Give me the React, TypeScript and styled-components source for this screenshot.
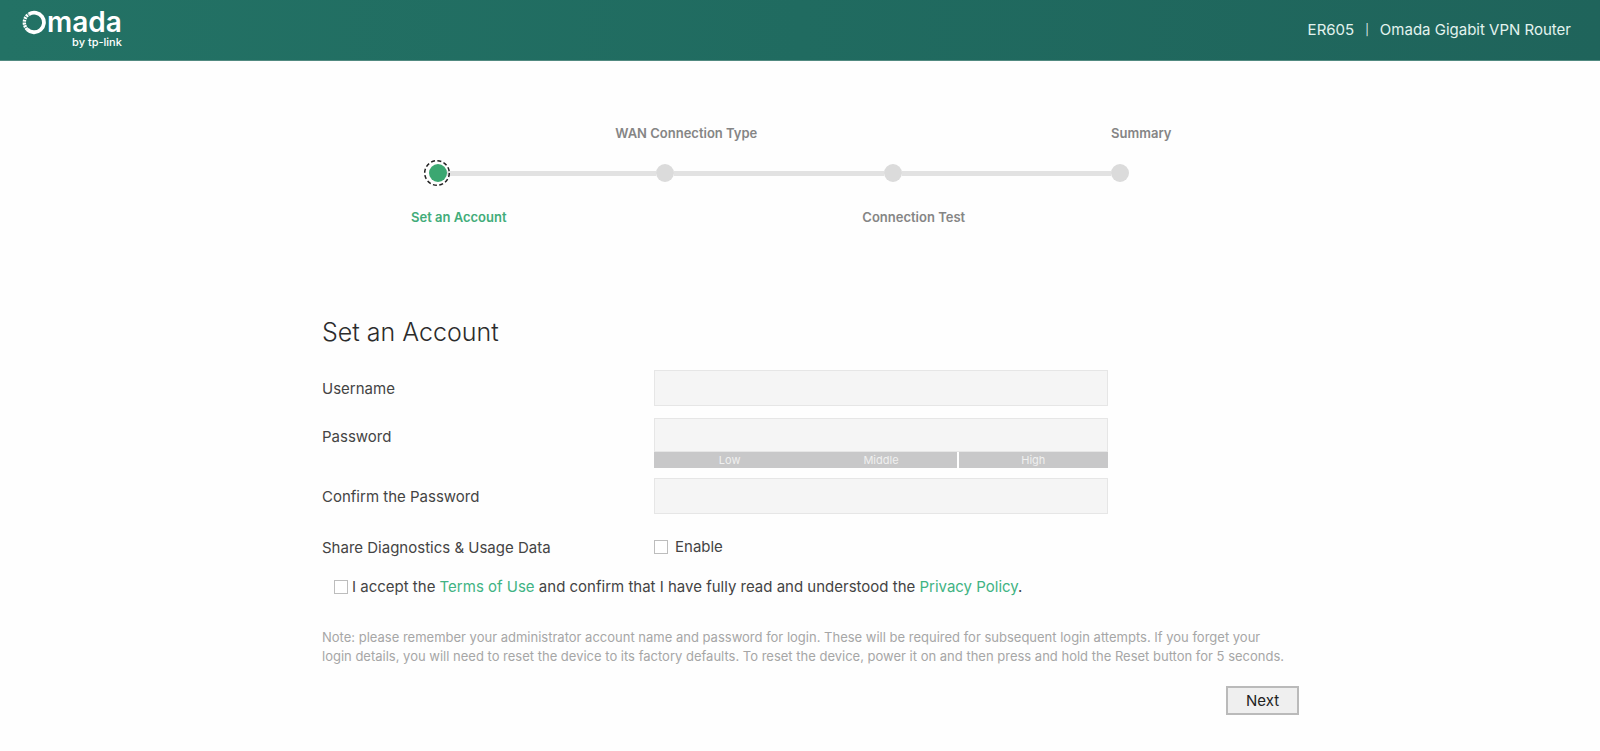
import React from "react";
import styled, { createGlobalStyle } from "styled-components";

const GlobalStyle = createGlobalStyle`
  *, *::before, *::after { box-sizing: border-box; }
  body {
    margin: 0;
    background: #fefefe;
    color: #444;
    font-family: Inter, "Liberation Sans", sans-serif;
    font-size: 15px;
    font-weight: 400;
    line-height: 20px;
  }
`;

const Header = styled.header`
  display: flex;
  align-items: center;
  justify-content: space-between;
  height: 61px;
  padding: 0 29px 0 22px;
  color: #e3f3ef;
  background: linear-gradient(90deg, #237265 0%, #206b60 50%, #1f645b 100%);
  border-bottom: 1px solid #518a81;
`;

const Logo = styled.div`
  display: flex;
  flex-direction: column;
  align-items: flex-end;
  padding-bottom: 4px;
  color: #fff;
`;

const Wordmark = styled.div`
  display: flex;
  align-items: center;
  gap: 1px;
  height: 27px;
  font-size: 28px;
  font-weight: 600;
  line-height: 27px;
`;

const Byline = styled.div`
  font-size: 11px;
  font-weight: 500;
  line-height: 12px;
`;

const Device = styled.div`
  display: flex;
  gap: 11px;
`;

const Divider = styled.span`
  font-size: 11px;
`;

const Steps = styled.ol`
  display: grid;
  grid-template-columns: repeat(4, 1fr);
  max-width: 910px;
  margin: 0 auto;
  padding: 62px 0 0;
  list-style: none;
`;

const Step = styled.li`
  display: grid;
  grid-template-rows: 20px 60px 28px;
  justify-items: center;
`;

const StepLabel = styled.span<{ $bottom: boolean; $active: boolean }>`
  grid-row: ${(p) => (p.$bottom ? 3 : 1)};
  align-self: center;
  font-size: 13px;
  font-weight: 600;
  color: ${(p) => (p.$active ? "#41ac79" : "#858585")};
`;

const Track = styled.div`
  grid-row: 2;
  display: flex;
  align-items: center;
  width: 100%;
`;

const Rail = styled.span<{ $lead?: boolean; $hidden: boolean }>`
  flex: ${(p) => (p.$lead ? "0 0 calc(50% - 30px)" : "1")};
  height: 5px;
  background: ${(p) => (p.$hidden ? "transparent" : "#e2e2e2")};
`;

const Dot = styled.span<{ $active: boolean }>`
  position: relative;
  flex: none;
  width: 18px;
  height: 18px;
  border-radius: 50%;
  background: ${(p) => (p.$active ? "#3ba771" : "#dbdbdb")};
`;

const Ring = styled.svg`
  position: absolute;
  top: -5px;
  left: -6px;
`;

const Form = styled.form`
  max-width: 998px;
  margin: 0 auto;
  padding: 83px 0 0 21px;
`;

const Title = styled.h1`
  margin: 0 0 20px;
  font-size: 25px;
  font-weight: 300;
  line-height: 36px;
  color: #2c2c2c;
`;

const Row = styled.div<{ $gap: number }>`
  display: grid;
  grid-template-columns: 332px minmax(0, 454px);
  align-items: start;
  margin-bottom: ${(p) => p.$gap}px;
`;

const RowLabel = styled.label`
  padding-top: 9px;
`;

const TextBox = styled.input<{ $joined?: boolean }>`
  display: block;
  width: 100%;
  height: ${(p) => (p.$joined ? 34 : 36)}px;
  padding: 0 10px;
  border: 1px solid #e6e6e6;
  border-radius: 0;
  background: #f5f5f5;
  font: inherit;
  outline: none;
`;

const Strength = styled.div`
  display: grid;
  grid-template-columns: repeat(3, 1fr);
  background: #c8c8c9;
  color: #f0f0f0;
  font-size: 11px;
  line-height: 16px;
  text-align: center;

  span:last-child { border-left: 2px solid #fff; }
`;

const Check = styled.label`
  display: flex;
  align-items: center;
  gap: 7px;
  padding-top: 8px;
`;

const Tick = styled.input`
  appearance: none;
  flex: none;
  width: 14px;
  height: 14px;
  margin: 0;
  border: 1px solid #bdbdbd;
  background: #fff;

  &:checked { background: #3ba771; }
`;

const Terms = styled.div`
  display: flex;
  align-items: center;
  gap: 4px;
  padding-left: 12px;
`;

const Link = styled.a`
  color: #41b383;
  text-decoration: none;
`;

const Note = styled.p`
  margin: 31px 0 20px;
  font-size: 13px;
  line-height: 19px;
  color: #a6a6a6;
`;

const Actions = styled.div`
  display: flex;
  justify-content: flex-end;
`;

const NextButton = styled.button`
  width: 73px;
  height: 29px;
  padding: 0;
  border: 2px solid #bababa;
  background: #efefef;
  color: #222;
  font: inherit;
`;

const steps = ["Set an Account", "WAN Connection Type", "Connection Test", "Summary"];

export default function App() {
  return (
    <>
      <GlobalStyle />
      <Header>
        <Logo>
          <Wordmark>
            <svg width="24" height="25" viewBox="0 0 24 25" fill="none" stroke="#fff" aria-label="O">
              <path d="M7 4.1A9.8 9.8 0 1 1 5.2 19.4" strokeWidth="3.8" />
              <path d="M5.2 19.4A9.8 9.8 0 0 1 7 4.1" strokeWidth="3.4" strokeDasharray="2 0.8" />
            </svg>
            mada
          </Wordmark>
          <Byline>by tp-link</Byline>
        </Logo>
        <Device>
          <span>ER605</span>
          <Divider>|</Divider>
          <span>Omada Gigabit VPN Router</span>
        </Device>
      </Header>
      <main>
        <Steps>
          {steps.map((name, i) => (
            <Step key={name} aria-current={i === 0 ? "step" : undefined}>
              <StepLabel $bottom={i % 2 === 0} $active={i === 0}>{name}</StepLabel>
              <Track>
                <Rail $lead $hidden={i === 0} />
                <Dot $active={i === 0}>
                  {i === 0 && (
                    <Ring width="28" height="28" viewBox="0 0 28 28" fill="none" aria-hidden="true">
                      <circle cx="14" cy="14" r="12.3" stroke="#222" strokeWidth="1.5" strokeDasharray="4 2.44" />
                    </Ring>
                  )}
                </Dot>
                <Rail $hidden={i === steps.length - 1} />
              </Track>
            </Step>
          ))}
        </Steps>
        <Form onSubmit={(e) => e.preventDefault()}>
          <Title>Set an Account</Title>
          <Row $gap={12}>
            <RowLabel htmlFor="username">Username</RowLabel>
            <TextBox id="username" type="text" />
          </Row>
          <Row $gap={10}>
            <RowLabel htmlFor="password">Password</RowLabel>
            <div>
              <TextBox id="password" type="password" $joined />
              <Strength>
                <span>Low</span>
                <span>Middle</span>
                <span>High</span>
              </Strength>
            </div>
          </Row>
          <Row $gap={15}>
            <RowLabel htmlFor="confirm">Confirm the Password</RowLabel>
            <TextBox id="confirm" type="password" />
          </Row>
          <Row $gap={19}>
            <RowLabel as="span">Share Diagnostics &amp; Usage Data</RowLabel>
            <Check>
              <Tick type="checkbox" />
              Enable
            </Check>
          </Row>
          <Terms>
            <Tick type="checkbox" id="terms" />
            <label htmlFor="terms">
              I accept the <Link href="#terms-of-use">Terms of Use</Link> and confirm that I have fully
              read and understood the <Link href="#privacy-policy">Privacy Policy</Link>.
            </label>
          </Terms>
          <Note>
            Note: please remember your administrator account name and password for login. These will be
            required for subsequent login attempts. If you forget your
            <br />
            login details, you will need to reset the device to its factory defaults. To reset the
            device, power it on and then press and hold the Reset button for 5 seconds.
          </Note>
          <Actions>
            <NextButton type="submit">Next</NextButton>
          </Actions>
        </Form>
      </main>
    </>
  );
}
